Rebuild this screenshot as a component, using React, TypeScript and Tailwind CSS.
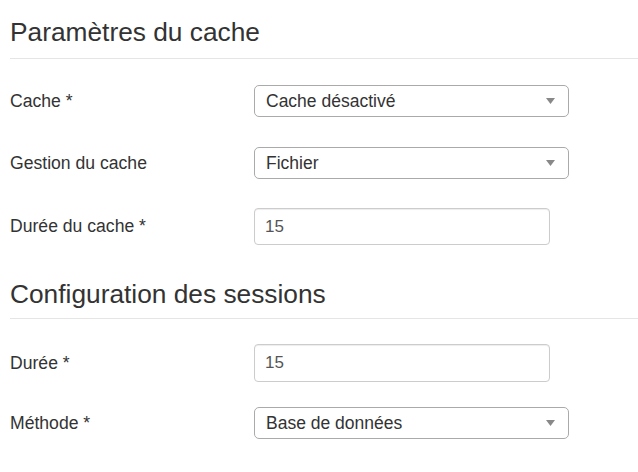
const FONT = "font-['Liberation_Sans',Arial,sans-serif]";

function Caret() {
  return (
    <svg width="9" height="6" viewBox="0 0 9 6" className="shrink-0">
      <path d="M0 0 H9 L4.5 6 Z" fill="#888" />
    </svg>
  );
}

function SelectBox({ value, className = "" }: { value: string; className?: string }) {
  return (
    <div
      className={`flex h-[32px] w-[315px] items-center justify-between rounded-[5px] border border-[#aaa] bg-white pl-[11px] pr-[13px] text-[17.5px] text-[#333] ${className}`}
    >
      <span>{value}</span>
      <Caret />
    </div>
  );
}

function TextBox({ value, className = "" }: { value: string; className?: string }) {
  return (
    <div
      className={`flex w-[296px] items-center rounded-[4px] border border-[#ccc] bg-white pl-[10px] text-[17px] text-[#555] shadow-[inset_0_1px_1px_rgba(0,0,0,0.075)] ${className}`}
    >
      {value}
    </div>
  );
}

function Row({ label, children, className = "" }: { label: string; children: React.ReactNode; className?: string }) {
  return (
    <div className={`flex items-center ${className}`}>
      <label className="w-[244px] shrink-0 text-[17.6px] text-[#333]">{label}</label>
      {children}
    </div>
  );
}

function SectionTitle({ title, className = "" }: { title: string; className?: string }) {
  return (
    <h2 className={`border-b border-[#e5e5e5] text-[26.3px] leading-[34px] text-[#333] ${className}`}>
      {title}
    </h2>
  );
}

export default function App() {
  return (
    <div className={`h-[472px] w-[638px] overflow-hidden bg-white pl-[10px] ${FONT}`}>
      <SectionTitle title="Paramètres du cache" className="pt-[15px] pb-[9px]" />
      <Row label="Cache *" className="mt-[26px]">
        <SelectBox value="Cache désactivé" className="h-[31px]" />
      </Row>
      <Row label="Gestion du cache" className="mt-[30px]">
        <SelectBox value="Fichier" />
      </Row>
      <Row label="Durée du cache *" className="mt-[29px]">
        <TextBox value="15" className="h-[37px]" />
      </Row>

      <SectionTitle title="Configuration des sessions" className="mt-[32px] pb-[7px]" />
      <Row label="Durée *" className="mt-[25px]">
        <TextBox value="15" className="h-[38px]" />
      </Row>
      <Row label="Méthode *" className="mt-[25px]">
        <SelectBox value="Base de données" />
      </Row>
    </div>
  );
}
